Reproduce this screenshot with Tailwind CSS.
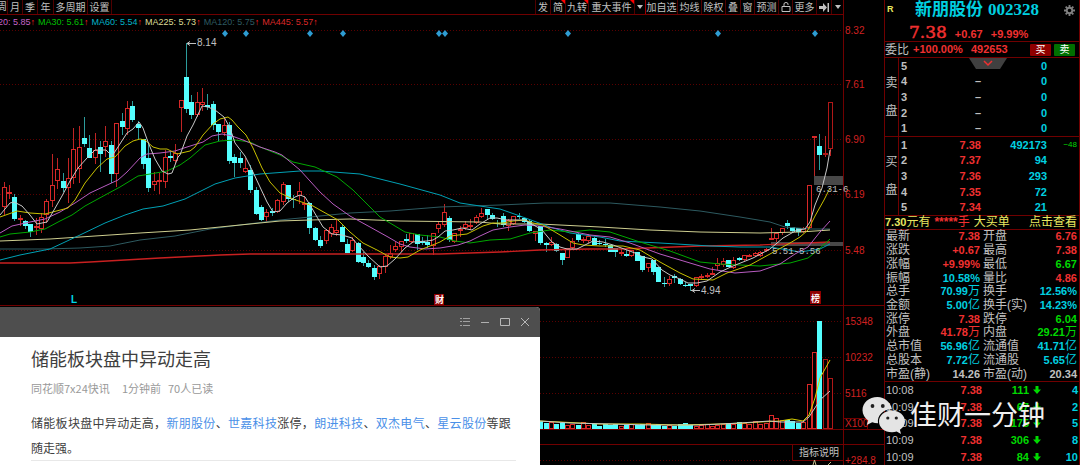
<!DOCTYPE html>
<html lang="zh-CN">
<head>
<meta charset="utf-8">
<title>新朋股份 002328</title>
<script src="https://cdn.jsdelivr.net/npm/@tailwindcss/browser@4"></script>
</head>
<body class="bg-black">
<div class="relative flex min-h-screen overflow-hidden bg-black font-['Liberation_Sans','Noto_Sans_CJK_SC',sans-serif] text-[#c0c0c0]">

  <main class="min-w-0 flex-1">
    <div class="mr-[40px] border-r border-[#700000]">
      <nav class="flex h-[15px] items-stretch overflow-hidden border-b border-[#700000] text-[10px] leading-[13px] whitespace-nowrap" aria-label="图表工具栏">
        <button class="flex w-[8px] justify-end border-r border-[#500000]">周</button>
        <button class="w-[15px] border-r border-[#500000]">月</button>
        <button class="w-[15px] border-r border-[#500000]">季</button>
        <button class="w-[16px] border-r border-[#500000]">年</button>
        <button class="w-[34px] border-r border-[#500000]">多周期</button>
        <button class="w-[24px] border-r border-[#500000]">设置</button>
        <button class="ml-auto w-[16px] border-x border-[#500000]">发</button>
        <button class="relative w-[15px] border-r border-[#500000]">简<i class="absolute top-0 right-0 size-1 bg-[#ff0000] [clip-path:polygon(0_0,100%_0,100%_100%)]"></i></button>
        <button class="relative w-[23px] border-r border-[#500000]">九转<i class="absolute top-0 right-0 size-1 bg-[#ff0000] [clip-path:polygon(0_0,100%_0,100%_100%)]"></i></button>
        <button class="relative w-[46px] border-r border-[#500000]">重大事件<i class="absolute top-0 right-0 size-1 bg-[#ff0000] [clip-path:polygon(0_0,100%_0,100%_100%)]"></i></button>
        <button class="flex w-[11px] items-center justify-center border-r border-[#a00000]" aria-label="更多事件"><svg class="h-[4px] w-[6px]" viewBox="0 0 6 4"><path d="M0 0H6L3 4Z" fill="#c0c0c0"/></svg></button>
        <button class="w-[32px] border-r border-[#500000]">加自选</button>
        <button class="w-[24px] border-r border-[#500000]">均线</button>
        <button class="w-[24px] border-r border-[#500000]">除权</button>
        <button class="w-[15px] border-r border-[#500000]">叠</button>
        <button class="w-[14px] border-r border-[#500000]">窗</button>
        <button class="w-[24px] border-r border-[#500000]">预测</button>
        <button class="flex w-[14px] items-center justify-center border-r border-[#500000]" aria-label="锁定"><svg class="size-[10px]" viewBox="0 0 10 10" fill="none" stroke="#c0c0c0"><path d="M1 4.5H9V9.5H1ZM3 4.5V2Q3 .5 5 .5T7 2V3"/></svg></button>
        <button class="w-[24px] border-r border-[#500000]">更多</button>
        <button class="flex w-[15px] items-center justify-center border-r border-[#500000]" aria-label="跳到最新"><svg class="h-[9px] w-[10px]" viewBox="0 0 10 9"><path d="M0 3H4V0L8 4.500L4 9V6H0ZM8.500 0H10V9H8.500Z" fill="#c0c0c0"/></svg></button>
        <button class="flex w-[11px] items-center justify-center" aria-label="展开"><svg class="h-[4px] w-[6px]" viewBox="0 0 6 4"><path d="M0 0H6L3 4Z" fill="#c0c0c0"/></svg></button>
      </nav>
      <div class="-ml-[2px] flex h-[14px] items-center gap-[3px] text-[9px] leading-[14px] whitespace-nowrap">
        <span class="text-[#c864c8]">20: 5.85<b class="font-normal text-[#ff2020]">↑</b></span>
        <span class="text-[#00c000]">MA30: 5.61<b class="font-normal text-[#ff2020]">↑</b></span>
        <span class="text-[#00b4c8]">MA60: 5.54<b class="font-normal text-[#ff2020]">↑</b></span>
        <span class="text-[#dcdc96]">MA225: 5.73<b class="font-normal text-[#ff2020]">↑</b></span>
        <span class="text-[#2d5a60]">MA120: 5.75<b class="font-normal text-[#ff2020]">↑</b></span>
        <span class="text-[#dc2828]">MA445: 5.57<b class="font-normal text-[#ff2020]">↑</b></span>
      </div>
    </div>

    <svg id="chart" class="block h-auto w-full overflow-visible" viewBox="0 29 884 436" role="img" aria-label="日K线与成交量">
      <g stroke="#5a0000" stroke-dasharray="1 2" fill="none">
        <path d="M0 30.500H843M0 84.500H843M0 139.500H843M0 194.500H843M0 250.500H843M540 321.500H843M540 357.500H843M540 393.500H843M540 460.500H792"/>
      </g>
      <g stroke="#700000" fill="none">
        <path d="M843.500 29V465M0 305.500H884M540 429.500H884M540 444.500H884M792.500 445V460.500H843M844 418.500H867.500V429"/>
      </g>
      <rect x="814" y="176" width="29" height="9" fill="#484848"/>
      <rect x="771" y="242" width="72" height="4" fill="#484848"/>
      <g id="candles" shape-rendering="crispEdges"></g>
      <g id="volume" shape-rendering="crispEdges"></g>
      <g fill="none" stroke-width="1">
        <polyline stroke="#c82020" stroke-width="1.300" points="0,263 70,263 90,262 160,258 220,255 250,254 440,254 500,252 540,250 590,249 620,249 700,246 760,245 830,242"/>
        <polyline stroke="#2d5a60" points="0,249 45,249 80,248 110,246 140,240 175,236 210,229 240,225 280,220 300,218 350,213 390,211 440,207 500,205 545,203 610,203 660,207 700,211 740,217 770,222 785,227 810,229 830,229"/>
        <polyline stroke="#cfcf90" points="0,241 50,239 80,237 140,233 190,230 240,225 280,221 310,220 350,219 400,221 480,222 500,224 540,224 600,227 650,230 700,232 760,233 800,232 830,230"/>
        <polyline stroke="#00a0b4" points="0,260 20,255 50,249 80,235 105,223 125,215 143,209 163,206 185,199 215,184 235,178 260,174 300,171 320,171 360,174 400,184 440,195 460,203 480,206 500,209 520,216 550,227 570,233 600,237 620,241 660,243 710,246 740,247 770,247 800,252 820,249 830,244"/>
        <polyline stroke="#00a800" points="0,237 10,234 30,232 45,229 60,221 72,215 85,206 107,194 120,187 138,176 150,174 167,171 180,165 190,158 205,145 220,141 235,140 250,142 260,147 280,155 293,162 315,167 337,177 353,190 380,217 405,232 420,235 440,237 455,241 470,243 490,240 510,239 530,233 550,230 570,232 590,230 610,232 640,242 670,251 700,262 720,264 760,266 790,263 808,258 818,250 830,239"/>
        <polyline stroke="#b85cc0" points="0,233 12,226 30,222 45,219 60,212 75,203 90,193 105,186 118,180 127,172 140,158 147,154 160,153 175,151 187,147 203,142 212,136 222,134 232,136 243,140 260,147 275,152 282,155 300,170 320,192 333,204 350,216 370,227 388,237 400,244 410,247 425,249 440,248 458,245 470,241 480,236 493,230 510,227 525,225 540,226 560,229 590,235 610,237 630,243 660,254 690,263 710,269 735,273 760,271 780,264 795,254 808,247 820,232 830,221"/>
        <polyline stroke="#c8c000" points="0,217 17,211 30,213 45,214 68,208 75,200 85,183 97,168 107,159 115,157 125,146 133,141 140,139 145,140 153,147 160,149 167,149 177,154 190,151 195,147 203,135 213,124 220,119 228,117 232,120 238,127 246,135 253,148 262,168 270,182 280,193 293,199 313,206 320,210 338,220 350,232 363,243 377,250 390,257 400,258 408,257 420,250 440,242 450,236 467,234 483,226 493,223 503,223 513,221 525,220 533,223 543,225 555,232 560,235 573,243 583,245 600,246 623,246 640,250 660,262 680,273 693,279 713,280 727,273 750,265 770,254 790,243 800,237 808,230 815,216 824,200 830,188"/>
        <polyline stroke="#c8c8c8" points="0,215 10,203 14,202 22,206 30,215 37,224 47,222 54,210 62,196 70,181 78,168 87,158 95,150 106,150 112,156 118,147 127,133 133,129 139,122 143,128 148,142 155,159 162,171 168,174 172,173 178,157 180,155 187,136 193,125 202,106 208,107 215,110 224,117 230,128 235,143 245,156 252,170 267,202 273,212 280,211 287,203 295,197 300,195 305,197 310,205 317,217 323,227 332,234 342,235 352,238 358,245 368,256 380,267 387,266 395,259 405,248 413,242 427,241 433,240 438,237 445,231 453,230 462,228 472,230 480,224 490,218 497,218 507,220 525,220 532,224 542,230 552,242 560,247 567,249 577,249 585,245 593,241 603,242 613,245 627,250 635,253 643,257 652,259 662,270 670,275 680,279 688,283 697,283 707,281 720,272 733,266 753,258 770,249 783,238 797,230 805,229 810,222 815,205 822,188 827,168 830,150"/>
        <polyline stroke="#d8d000" points="540,421 560,422 600,424 640,424 680,425 720,424 745,423 760,422 780,421 792,419 803,421 809,415 815,398 820,378 830,360"/>
        <polyline stroke="#c8c8c8" points="540,421 570,423 610,424 650,425 700,425 740,423 770,421 780,422 803,422 809,417 820,400 830,391"/>
        <path stroke="#c8c090" d="M813 465L814.500 460L816 465M828 465L831 462"/>
        <path stroke="#c0c0c0" d="M187 43.500H196M190 41.500L187 43.500L190 45.500M691 290.500H700M695 288.500L692 290.500L695 292.500"/>
      </g>
      <g id="events" fill="#2e9cd2"></g>
      <g font-size="10" fill="#c0c0c0">
        <text x="197" y="46">8.14</text>
        <text x="701" y="294">4.94</text>
        <text x="816" y="192" font-size="9" font-family="Liberation Mono">6.31-6</text>
        <text x="772" y="254" font-size="9" font-family="Liberation Mono">5.51-5.56</text>
        <text x="799" y="456">指标说明</text>
      </g>
      <g font-size="10" fill="#d02020">
        <text x="845" y="34">8.32</text>
        <text x="845" y="88">7.61</text>
        <text x="845" y="143">6.90</text>
        <text x="845" y="198">6.19</text>
        <text x="845" y="254">5.48</text>
        <text x="845" y="325">15348</text>
        <text x="845" y="361">10232</text>
        <text x="845" y="397">5116</text>
        <text x="845" y="427">X100</text>
        <text x="845" y="464">+284.8</text>
      </g>
      <rect x="434" y="294" width="10" height="11" fill="#900000"/>
      <rect x="810" y="291" width="11" height="13" fill="#900000"/>
      <g font-size="9" font-weight="bold" fill="#ffffff">
        <text x="435" y="303">财</text>
        <text x="811" y="302">榜</text>
        <text x="71" y="303" fill="#00d8e8" font-size="10">L</text>
      </g>
    </svg>
  </main>

  <aside class="flex w-[196px] shrink-0 flex-col border-x border-[#700000] text-[11px]">
    <header class="h-[42px] border-b border-[#700000]">
      <div class="flex h-[20px] items-center pr-[4px] pl-[2px]">
        <span class="w-[28px] text-[9px] font-bold text-[#e8e860]">R</span>
        <h1 class="flex items-center gap-[5px] text-[17px] leading-[20px] font-bold whitespace-nowrap text-[#00d0e0]"><span>新朋股份</span><span class="font-['Liberation_Serif',serif]">002328</span></h1>
        <button class="ml-auto" aria-label="设置"><svg class="size-[11px]" viewBox="0 0 12 12" fill="none" stroke="#808080"><circle cx="6" cy="6" r="3" stroke-width="2"/><path stroke-width="2" d="M6 0V2.500M6 9.500V12M0 6H2.500M9.500 6H12M1.800 1.800L3.500 3.500M8.500 8.500L10.200 10.200M10.200 1.800L8.500 3.500M3.500 8.500L1.800 10.200"/></svg></button>
      </div>
      <div class="flex h-[22px] items-baseline gap-[8px] pl-[24px] font-bold text-[#f03030]">
        <span class="font-['DejaVu_Serif',serif] text-[17px] leading-[25px] font-normal [-webkit-text-stroke:0.5px]">7.38</span><span>+0.67</span><span>+9.99%</span>
      </div>
    </header>
    <div class="flex h-[16px] items-center border-b border-[#700000] pr-[4px] font-bold text-[#f03030]">
      <span class="w-[28px] text-[12px] font-normal text-[#c0c0c0]">委比</span><span class="w-[58px]">+100.00%</span><span>492653</span>
      <button class="ml-auto h-[12px] w-[21px] rounded-[1px] bg-[#900000] text-[10px] leading-[12px] font-normal text-white">买</button>
      <button class="ml-[3px] h-[12px] w-[21px] rounded-[1px] bg-[#007000] text-[10px] leading-[12px] font-normal text-white">卖</button>
    </div>

    <section class="relative flex h-[79px] border-b border-[#700000]">
      <div class="flex w-[14px] flex-col items-center justify-center gap-[14px] border-r border-[#700000] text-[12px] leading-[14px]"><span>卖</span><span>盘</span></div>
      <table class="flex-1 table-fixed border-collapse font-bold"><tbody id="asks"></tbody></table>
      <button class="absolute top-0 left-[84px]" aria-label="展开盘口"><svg class="h-[11px] w-[38px]" viewBox="0 0 38 11"><path d="M0 0H38L31 11H7Z" fill="#404040"/><path d="M15 3L19 7L23 3" fill="none" stroke="#f03030" stroke-width="1.500"/></svg></button>
    </section>
    <section class="flex h-[79px] border-b border-[#700000]">
      <div class="flex w-[14px] flex-col items-center justify-center gap-[14px] border-r border-[#700000] text-[12px] leading-[14px]"><span>买</span><span>盘</span></div>
      <table class="flex-1 table-fixed border-collapse font-bold"><tbody id="bids"></tbody></table>
    </section>

    <a href="#" class="flex h-[14px] items-center border-b border-[#700000] pr-[2px] text-[12px] leading-[13px] whitespace-nowrap text-[#e8e860]">
      <b class="text-[11px]">7.30</b><span>元有</span><span class="ml-[4px] text-[#f03030]"><b>*****</b>手</span><span class="ml-[4px]">大买单</span><span class="ml-auto">点击查看</span>
    </a>

    <table class="h-[152px] w-full table-fixed border-collapse border-b border-[#700000]"><tbody id="quote"></tbody></table>
    <table class="h-[83px] w-full table-fixed border-collapse"><tbody id="ticks"></tbody></table>
  </aside>

  <article class="absolute bottom-0 left-0 flex h-[158px] w-1/2 flex-col overflow-hidden rounded-tr-[4px] bg-white font-['Noto_Sans_CJK_SC',sans-serif]">
    <header class="flex h-[30px] shrink-0 items-center justify-end gap-[10px] bg-[#4e4e4e] pr-[10px]">
      <button aria-label="列表"><svg class="size-[10px]" viewBox="0 0 10 10" stroke="#a0a0a0"><path d="M0 1.500H2M3 1.500H10M0 4.500H2M3 4.500H10M0 8.500H2M3 8.500H10"/></svg></button>
      <button aria-label="最小化"><svg class="size-[10px]" viewBox="0 0 10 10" stroke="#b0b0b0"><path d="M1 5.500H9"/></svg></button>
      <button aria-label="最大化"><svg class="size-[10px]" viewBox="0 0 10 10" fill="none" stroke="#b8b8b8"><path d="M.5 1.500H9.500V8.500H.5Z"/></svg></button>
      <button aria-label="关闭"><svg class="size-[10px]" viewBox="0 0 10 10" fill="none" stroke="#b8b8b8"><path d="M1 1L9 9M9 1L1 9"/></svg></button>
    </header>
    <div class="mr-[24px] ml-[31px] border-b border-[#e8e8e8]">
      <h2 class="pt-[8px] text-[18px] leading-[26px] text-[#404040]">储能板块盘中异动走高</h2>
      <p class="flex pt-[9px] text-[11px] leading-[16px] text-[#999999]"><span class="w-[91px]">同花顺7x24快讯</span><span class="w-[46px]">1分钟前</span><span>70人已读</span></p>
      <p class="mt-[14px] mr-[5px] text-justify text-[12px] leading-[25px] text-[#404040]">储能板块盘中异动走高，<a href="#" class="text-[#4a90e8]">新朋股份</a>、<a href="#" class="text-[#4a90e8]">世嘉科技</a>涨停，<a href="#" class="text-[#4a90e8]">朗进科技</a>、<a href="#" class="text-[#4a90e8]">双杰电气</a>、<a href="#" class="text-[#4a90e8]">星云股份</a>等跟随走强。</p>
    </div>
  </article>

  <div class="pointer-events-none absolute right-[35px] bottom-[31px] flex items-center gap-[5px] text-[#f0f0f0]">
    <svg class="h-[37px] w-[43px]" viewBox="0 0 43 37" fill="#e4e4e4">
      <path d="M15.500 0C7 0 .5 5.800.5 13.200C.5 17.500 2.800 21 6.200 23.500L4.700 28L10.200 25.300C12 25.800 13.800 26.200 16 26.200C15 18.500 21 12 30 12.200C28.500 5 22.500 0 15.500 0Z"/>
      <path d="M30 13.500C22.500 13.500 17 18.500 17 24.500S22.500 35.300 30 35.300C31.600 35.300 33.200 35 34.700 34.500L39 37L37.900 32.800C41 30.700 43 27.900 43 24.500C43 18.500 37.500 13.500 30 13.500Z"/>
      <g fill="#202020"><circle cx="10.500" cy="9" r="1.900"/><circle cx="20.800" cy="9" r="1.900"/><circle cx="25.800" cy="21" r="1.600"/><circle cx="34.300" cy="21" r="1.600"/></g>
    </svg>
    <span class="text-[27px] leading-[34px]">佳财一分钟</span>
  </div>
</div>

<script>
const NS = 'http://www.w3.org/2000/svg';
function add(parent, tag, attrs) {
  const el = document.createElementNS(NS, tag);
  for (const k in attrs) el.setAttribute(k, attrs[k]);
  parent.appendChild(el);
}
// One candle per entry: direction (r up, c down), high, body top, body bottom, low
const candles = `r182,187,207,215 r185,192,194,199 c194,197,219,221 r215,218,219,226 c220,221,226,229 c224,224,232,237 r218,226,227,235 r213,217,229,233 r199,201,215,223 r154,185,201,207
r158,169,181,189 c173,181,188,192 r158,178,188,203 r128,149,178,184 r126,147,169,183 c117,138,144,147 c135,148,158,158 r133,150,158,164 c141,147,154,172 r126,141,147,157
c141,145,174,183 r123,123,174,187 c113,121,127,135 r101,108,129,135 c101,106,120,122 c121,124,128,139 c139,139,164,169 c142,158,188,192 r172,181,185,191 r173,180,181,194
r150,157,182,188 c152,156,158,162 r144,153,161,163 r100,100,108,132 c43,77,109,113 c95,102,115,119 r92,102,115,117 r88,102,105,111 c94,105,107,110 c101,104,125,130
c124,124,132,141 r118,125,133,136 c122,125,161,164 c154,157,163,177 c152,158,163,168 r158,168,172,173 c165,170,190,193 c187,190,214,215 c205,207,220,221 r209,212,217,222
c208,211,213,216 r199,200,212,213 r182,184,202,205 c185,185,199,202 c195,199,200,208 r182,191,196,204 r196,203,204,210 c202,203,228,234 c227,228,240,241 c236,240,246,248
r229,230,241,244 r224,227,234,237 r219,230,233,236 c225,227,242,242 c239,244,253,253 r237,240,251,252 c242,243,262,263 c252,257,263,266 c260,263,267,268 c265,268,277,280
r265,266,274,279 r255,256,267,273 r245,253,257,259 r242,246,250,252 r241,241,247,252 c234,239,241,243 r233,233,242,243 c234,234,244,250 c237,241,243,245 c235,242,245,248
r233,233,246,255 r221,224,229,233 r204,212,225,227 c216,218,240,242 r233,233,242,243 r226,229,231,237 r221,224,228,230 r219,225,227,230 r215,217,223,224 r208,213,217,218
c209,209,215,219 c213,215,219,220 c220,223,224,227 c213,216,225,227 r219,220,226,231 r216,216,224,225 c213,216,217,219 c218,218,222,223 c220,221,231,232 r231,231,234,241
c226,226,243,245 c242,243,245,252 r237,242,245,246 c243,244,251,252 c253,253,260,265 r248,248,258,258 r238,241,248,249 c233,234,240,242 r237,239,240,243 r234,236,241,243
c237,238,245,245 c240,243,244,245 c239,244,245,247 c245,245,252,252 c248,248,252,257 r249,252,253,256 c250,254,256,257 r250,250,256,257 c252,252,261,261 c256,256,270,272
r263,263,268,272 c260,260,272,275 c267,267,282,282 c277,283,284,287 r276,279,284,286 c274,276,278,283 c278,279,284,285 c282,285,286,287 c284,284,286,291 r277,277,286,287
r274,276,277,280 r273,275,276,278 r267,273,274,275 r258,263,266,270 r258,261,265,267 c260,260,267,267 r257,260,268,269 c257,258,260,261 r255,255,260,261 r254,255,256,257
r252,253,256,257 r251,252,256,257 r248,249,251,252 r228,238,239,240 r233,233,239,242 r228,228,233,235 c220,223,226,229 c227,227,231,233 c228,228,232,236 r227,228,232,233
r185,185,228,229 r136,136,137,176 c134,146,155,170 r136,153,154,157 r102,102,149,156`.split(/\s+/);
const step = 826.5 / 154, cg = document.getElementById('candles'), vg = document.getElementById('volume');
const vols = [420,421,423,422,424,423,425,424,425,422,425,424,426,424,425,424,426,425,424,425,424,423,425,424,426,425,426,424,423,425,426,425,424,426,425,424,423,424,422,423,424,421,424,423,415,418,420,420,421,423,422,384,352,321,359,378];
const offset = candles.length - vols.length;
candles.forEach((s, i) => {
  const up = s[0] === 'r', [h, t, b, l] = s.slice(1).split(',').map(Number), x = Math.round(3.5 + i * step);
  const edge = i > 152 ? '#b01818' : '#d82828';
  add(cg, 'rect', {x, y: h, width: 1, height: Math.max(1, l - h), fill: up ? '#c02424' : '#2c9c9c'});
  if (up) add(cg, 'rect', {x: x - 1.5, y: t + .5, width: 4, height: Math.max(1, b - t - 1), fill: '#000', stroke: edge});
  else add(cg, 'rect', {x: x - 2, y: t, width: 5, height: Math.max(1, b - t), fill: '#54ffff'});
  const v = vols[i - offset];
  if (v) {
    if (up) add(vg, 'rect', {x: x - 1.5, y: v + .5, width: 4, height: 428 - v, fill: '#000', stroke: edge});
    else add(vg, 'rect', {x: x - 2, y: v, width: 5, height: 429 - v, fill: '#54ffff'});
  }
});
[225, 246, 310, 343, 439, 445, 568, 718, 815].forEach(x => add(document.getElementById('events'), 'path', {d: `M${x - 3} 33.5L${x} 30L${x + 3} 33.5L${x} 37Z`}));

const R = 'text-[#f03030]', G = 'text-[#00d800]', C = 'text-[#00d0e0]', W = 'text-[#c0c0c0]';
const level = ([n, p, v, d]) => `<tr><th scope="row" class="w-[12px] pl-[2px] text-left leading-[14px] text-[#c0c0c0]">${n}</th><td class="w-[70px] text-right leading-[14px] ${p === '–' ? W : R}">${p}</td><td class="w-[66px] text-right leading-[14px] text-[#00d0e0]">${v}</td><td class="pr-[2px] text-right text-[8px] leading-[14px] font-normal text-[#00d800]">${d || ''}</td></tr>`;
document.getElementById('asks').innerHTML = [[5,'',0],[4,'–',0],[3,'–',0],[2,'–',0],[1,'–',0]].map(level).join('');
document.getElementById('bids').innerHTML = [[1,'7.38',492173,'−48'],[2,'7.37',94],[3,'7.36',293],[4,'7.35',72],[5,'7.34',21]].map(level).join('');

const unit = v => v.replace(/([万亿])/, '<span class="text-[12px] font-normal">$1</span>');
document.getElementById('quote').innerHTML = [
  ['最新','7.38',R,'开盘','6.76',R],['涨跌','+0.67',R,'最高','7.38',R],['涨幅','+9.99%',R,'最低','6.67',G],
  ['振幅','10.58%',C,'量比','4.86',R],['总手','70.99万',C,'换手','12.56%',C],['金额','5.00亿',C,'换手(实)','14.23%',C],
  ['涨停','7.38',R,'跌停','6.04',G],['外盘','41.78万',R,'内盘','29.21万',G],['总市值','56.96亿',C,'流通值','41.71亿',C],
  ['总股本','7.72亿',C,'流通股','5.65亿',C],['市盈(静)','14.26',W,'市盈(动)','20.34',W]
].map(([a, b, bc, c, d, dc]) => `<tr class="leading-[13px] whitespace-nowrap"><th scope="row" class="w-[45px] pl-px text-left text-[12px] font-normal">${a}</th><td class="w-[50px] text-right font-bold ${bc}">${unit(b)}</td><th scope="row" class="w-[49px] pl-[3px] text-left text-[12px] font-normal">${c}</th><td class="pr-[2px] text-right font-bold ${dc}">${unit(d)}</td></tr>`).join('');

document.getElementById('ticks').innerHTML = [['10:08',111,4],['10:09',67,2],['10:09',175,5],['10:09',306,8],['10:09',84,10]]
  .map(([t, v, n]) => `<tr class="leading-[14px] font-bold"><td class="w-[36px] pl-px font-normal">${t}</td><td class="w-[61px] text-right text-[#f03030]">7.38</td><td class="w-[47px] text-right text-[#00d800]">${v}</td><td class="w-[16px] pl-[4px]"><svg class="h-[8px] w-[8px]" viewBox="0 0 8 8"><path d="M2.500 0H5.500V3.500H8L4 8L0 3.500H2.500Z" fill="#00d800"/></svg></td><td class="pr-px text-right text-[#00d0e0]">${n}</td></tr>`).join('');
</script>
</body>
</html>
